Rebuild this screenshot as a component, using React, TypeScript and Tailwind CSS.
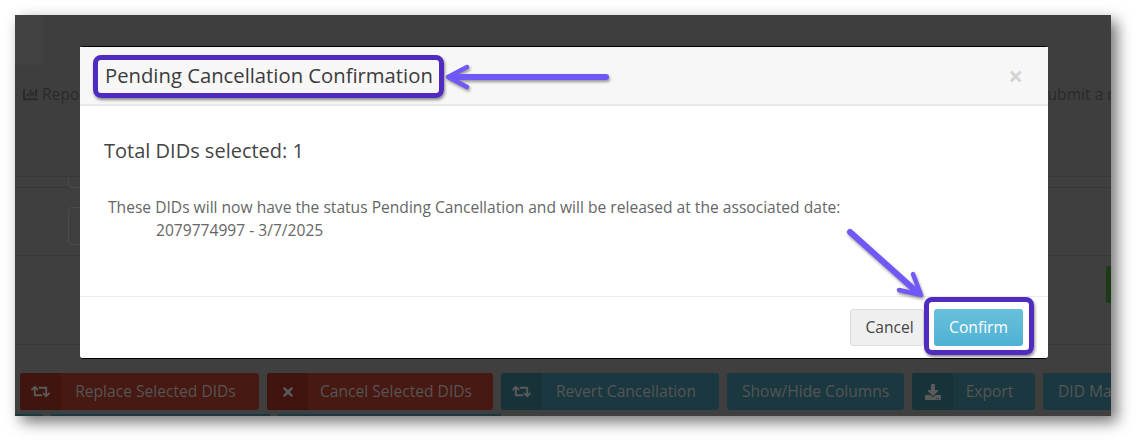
import React from "react";
import { FaChartBar, FaDownload, FaRetweet, FaTimes } from "react-icons/fa";

const actions = [
  { label: "Replace Selected DIDs", icon: "repeat", width: "w-[239px]", color: "bg-[#471912]", side: "bg-[#40150f]" },
  { label: "Cancel Selected DIDs", icon: "x", width: "w-[226px]", color: "bg-[#471912]", side: "bg-[#40150f]" },
  { label: "Revert Cancellation", icon: "repeat", width: "w-[218px]", color: "bg-[#1b3840]", side: "bg-[#18323a]" },
  { label: "Show/Hide Columns", icon: "", width: "w-[177px]", color: "bg-[#1b3840]", side: "" },
  { label: "Export", icon: "download", width: "w-[123px]", color: "bg-[#1b3840]", side: "bg-[#18323a]" },
  { label: "DID Management", icon: "", width: "w-[177px]", color: "bg-[#1b3840]", side: "" },
];

const ActionIcon = ({ name }: { name: string }) => {
  if (name === "repeat") return <FaRetweet size={19} className="text-[#5a5a5a]" />;
  if (name === "x") return <FaTimes size={14} className="text-[#5a5a5a]" />;
  return <FaDownload size={16} className="text-[#5a5a5a]" />;
};

// page behind the overlay
const BackgroundPage = () => (
  <div className="flex h-full flex-col bg-[#3f3f3f] text-[15.6px] text-[#2a2a2a]">
    <div className="flex h-[162px] flex-col border-b border-[#383838] bg-[#3e3e3e]">
      <div className="h-[50px] w-[29px] bg-[#414141]" />
      <div className="mt-[18px] flex items-center justify-between pl-[8px]">
        <span className="flex items-center gap-[4px] whitespace-nowrap">
          <FaChartBar size={15} />
          Reports
        </span>
        <span className="w-[72px] overflow-hidden whitespace-nowrap">Submit a request</span>
      </div>
    </div>
    <div className="flex h-[11px] border-b border-[#383838] bg-[#3f3f3f]">
      <div className="ml-[53px] h-[11px] w-[16px] rounded-b-[4px] border border-t-0 border-[#4b4b4b]" />
    </div>
    <div className="ml-[53px] mt-[19px] h-[38px] w-[20px] shrink-0 rounded-[4px] border border-[#4b4b4b]" />
    <div className="mt-[10px] flex h-[90px] items-start justify-end border-b border-t border-[#383838] pt-[10px]">
      <div className="h-[37px] w-[5px] rounded-l-[3px] bg-[#1c3a16]" />
    </div>
    <div className="flex-1" />
    <div className="flex gap-[8px] pl-[5px]">
      {actions.map((a) => (
        <div
          key={a.label}
          className={`flex h-[37px] shrink-0 overflow-hidden rounded-[3px] text-[#555] ${a.width} ${a.color}`}
        >
          {a.icon ? (
            <>
              <span className={`flex w-[41px] shrink-0 items-center justify-center ${a.side}`}>
                <ActionIcon name={a.icon} />
              </span>
              <span className="flex flex-1 items-center justify-center whitespace-nowrap pr-[9px] pt-[1px]">{a.label}</span>
            </>
          ) : (
            <span className="flex flex-1 items-center whitespace-nowrap pl-[15px] pt-[1px]">{a.label}</span>
          )}
        </div>
      ))}
    </div>
    <div className="mt-[4px] flex h-[2px] shrink-0 gap-[8px]">
      <div className="w-[28px] bg-[#1b3840]" />
      <div className="w-[219px] bg-[#1b3840]" />
      <div className="w-[223px] bg-[#1b3840]" />
    </div>
  </div>
);

export default function App() {
  return (
    <div className="h-[441px] w-[1136px] overflow-hidden bg-white pl-[15px] pt-[15px] font-['Open_Sans',sans-serif]">
      <div className="relative h-[401px] w-[1096px] overflow-hidden shadow-[6px_6px_14px_rgba(0,0,0,0.55)]">
        <BackgroundPage />

        {/* modal */}
        <div className="absolute left-[65px] top-[31px] flex h-[313px] w-[968px] flex-col rounded-[3px] border-b border-t border-black bg-white">
          <div className="flex h-[59px] shrink-0 items-center justify-between border-b-2 border-[#e8e8e8] bg-[#f7f7f7] pl-[25px] pr-[25px]">
            <h4 className="text-[20.25px] leading-none text-[#3b3b3b]">Pending Cancellation Confirmation</h4>
            <span className="text-[26px] font-bold leading-none text-[#d4d4d4]">×</span>
          </div>
          <div className="flex-1 pl-[24px] pt-[33px]">
            <p className="text-[20px] leading-[24px] text-[#444]">Total DIDs selected: 1</p>
            <div className="mt-[33px] pl-[4px] text-[15.6px] leading-[23px] text-[#666]">
              <p>These DIDs will now have the status Pending Cancellation and will be released at the associated date:</p>
              <p className="pl-[48px]">2079774997 - 3/7/2025</p>
            </div>
          </div>
          <div className="flex h-[62px] shrink-0 items-start justify-end gap-[10px] border-t border-[#ececec] pr-[25px] pt-[12px]">
            <button className="h-[37px] w-[74px] rounded-[3px] border border-[#dcdcdc] bg-[#efefef] pl-[5px] text-[15.6px] text-[#444]">
              Cancel
            </button>
            <button className="h-[37px] w-[89px] rounded-[3px] bg-gradient-to-b from-[#68c0db] to-[#4eb2d3] text-[15.6px] text-white">
              Confirm
            </button>
          </div>
        </div>

        {/* annotation boxes */}
        <div className="absolute left-[78px] top-[40px] h-[43px] w-[351px] rounded-[8px] border-[5px] border-[#4f2bbf] shadow-[1px_2px_3px_rgba(0,0,0,0.45)]" />
        <div className="absolute left-[909px] top-[282px] h-[58px] w-[110px] rounded-[8px] border-[5px] border-[#4f2bbf] shadow-[1px_2px_3px_rgba(0,0,0,0.45)]" />

        {/* annotation arrows */}
        <svg className="absolute left-0 top-0" width="1096" height="401" viewBox="0 0 1096 401" fill="none">
          <g stroke="#6f58f5" strokeLinecap="round" strokeLinejoin="round" style={{ filter: "drop-shadow(1px 2px 1.5px rgba(0,0,0,0.4))" }}>
            <path d="M591 62 L436 62" strokeWidth="6" />
            <path d="M452 52 L433 62 L452 72" strokeWidth="4.5" />
            <path d="M835 217 L902 277" strokeWidth="6" />
            <path d="M898 259 L906 280 L884 275" strokeWidth="4.5" />
          </g>
        </svg>
      </div>
    </div>
  );
}
